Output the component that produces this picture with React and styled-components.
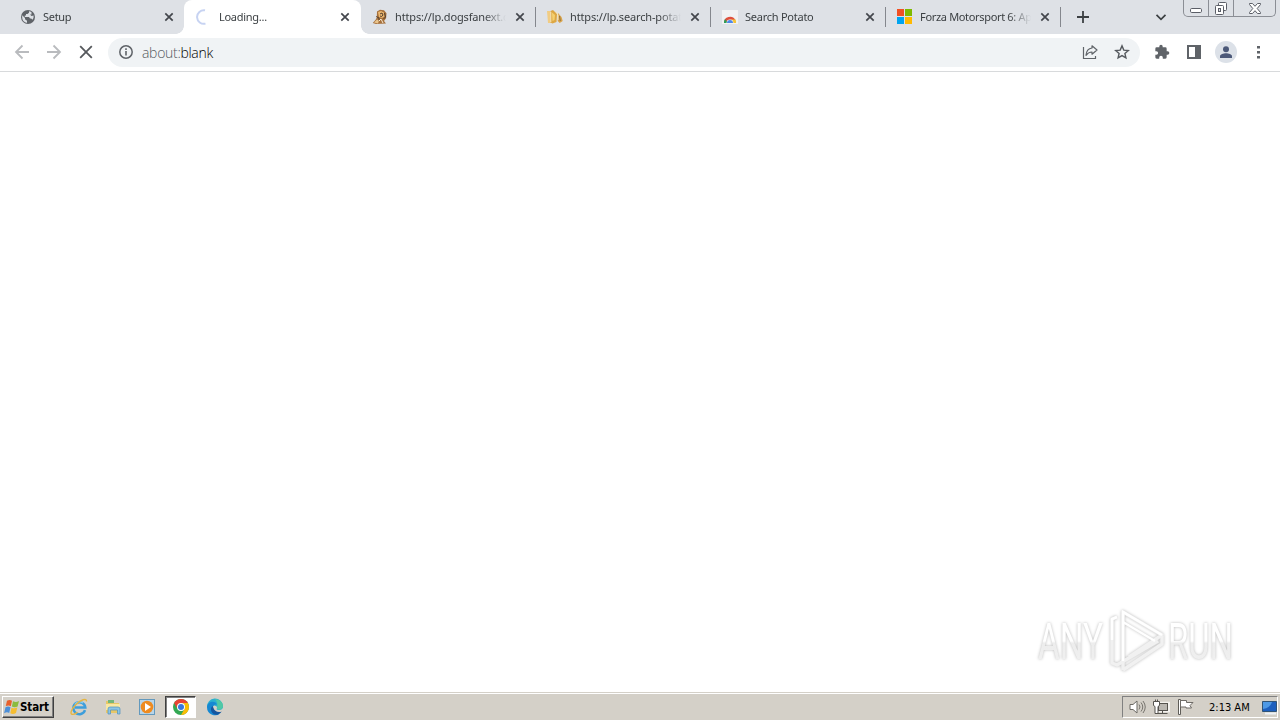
import styled, { createGlobalStyle, css } from "styled-components";

const tabs = [
  { title: "Setup", icon: GlobeIcon, width: 175, tracking: -0.3 },
  { title: "Loading...", icon: SpinnerIcon, width: 177, active: true, tracking: -0.28 },
  { title: "https://lp.dogsfanext.c", icon: DogIcon, width: 175, divider: true, tracking: -0.15 },
  { title: "https://lp.search-potat", icon: PotatoIcon, width: 175, divider: true, tracking: -0.15 },
  { title: "Search Potato", icon: StoreIcon, width: 175, divider: true, tracking: -0.25 },
  { title: "Forza Motorsport 6: Ap", icon: MicrosoftIcon, width: 175, divider: true, tracking: -0.33 },
];

export default function App() {
  return (
    <Screen>
      <GlobalStyle />
      <TabStrip>
        {tabs.map(({ title, icon: Icon, width, active, divider, tracking }) => (
          <Tab key={title} $width={width} $active={active} $divider={divider}>
            <Icon />
            <TabTitle $tracking={tracking}>{title}</TabTitle>
            <CloseIcon />
          </Tab>
        ))}
        <NewTab aria-label="New tab">
          <PlusIcon />
        </NewTab>
        <TabSearch aria-label="Search tabs">
          <ChevronIcon />
        </TabSearch>
        <WindowControls>
          <WindowButton $width={24} aria-label="Minimize">
            <MinimizeIcon />
          </WindowButton>
          <WindowButton $width={25} aria-label="Restore">
            <RestoreIcon />
          </WindowButton>
          <WindowButton $width={42} aria-label="Close">
            <WindowCloseIcon />
          </WindowButton>
        </WindowControls>
      </TabStrip>

      <Toolbar>
        <Navigation>
          <BackIcon />
          <ForwardIcon />
          <StopIcon />
        </Navigation>
        <AddressBar>
          <InfoIcon />
          <Address>
            about:<b>blank</b>
          </Address>
          <ShareIcon />
          <StarIcon />
        </AddressBar>
        <Actions>
          <PuzzleIcon />
          <SidePanelIcon />
          <Avatar>
            <PersonIcon />
          </Avatar>
          <MenuIcon />
        </Actions>
      </Toolbar>

      <Page>
        <Watermark />
      </Page>

      <Taskbar>
        <StartButton>
          <WindowsIcon />
          Start
        </StartButton>
        <QuickLaunch>
          <LaunchItem>
            <ExplorerIcon />
          </LaunchItem>
          <LaunchItem>
            <FolderIcon />
          </LaunchItem>
          <LaunchItem>
            <MediaIcon />
          </LaunchItem>
          <LaunchItem $pressed>
            <ChromeIcon />
          </LaunchItem>
          <LaunchItem>
            <EdgeIcon />
          </LaunchItem>
        </QuickLaunch>
        <Tray>
          <VolumeIcon />
          <NetworkIcon />
          <FlagIcon />
          <Clock>2:13 AM</Clock>
          <DesktopIcon />
        </Tray>
      </Taskbar>
    </Screen>
  );
}

/* Tab icons */

function GlobeIcon() {
  return (
    <TabIcon viewBox="0 0 16 16">
      <circle cx="8" cy="8" r="7" fill="#5f6368" />
      <path
        d="M2.200 6.200 5 9v1.200l2 1.600v2C4.500 13.600 2.200 11.500 2.200 8.500ZM9 2.300v1.500L7.500 5H6v1.600H4.800V8H9l1 1.500h1.200l1.300 1.300a5.700 5.700 0 0 0 1.100-4.300L11.500 7 10 5.500h1.500V3.200A6 6 0 0 0 9 2.300Z"
        fill="#dee1e6"
      />
    </TabIcon>
  );
}

function SpinnerIcon() {
  return (
    <TabIcon viewBox="0 0 16 16">
      <path d="M9 1.300A6.800 6.800 0 1 0 9.500 14.600" fill="none" stroke="#c7d3f2" strokeWidth="2" />
    </TabIcon>
  );
}

function DogIcon() {
  return (
    <TabIcon viewBox="0 0 16 16">
      <path d="M5 2.500 8 .8l4 .5 2.500 3-.4 5L12 12l2 2.500L4 15 .8 14l3-3.500 1-2Z" fill="#a7713c" />
      <path d="m6 3 3-1 3 1.500.5 4L10 9 7 8Z" fill="#ebb770" />
      <path d="m2 13.500 3-3 2 1-1 3Z" fill="#e9c48c" />
      <path d="M4.200 7.500 7 9v2.500M8 5l2-1 1 2-1.300 1.500L8 7M12.500 4l1 4-2 2" fill="none" stroke="#54402e" />
      <path d="m7 12 2-2 2 4" stroke="#f8ead0" fill="none" />
    </TabIcon>
  );
}

function PotatoIcon() {
  return (
    <TabIcon viewBox="0 0 16 16">
      <path d="M0 2h3l1 12H1Z" fill="#f1cc83" />
      <path d="M3.500 2 6 1l4 4-.5 8-4 1.500-2-1Z" fill="#dda743" />
      <path d="M5 3.500 8 6l-.5 5-2 1Z" fill="#f5d070" />
      <path d="m11 4 3.500 4 1.200 4-3 2-2-2Z" fill="#d9a349" />
      <path d="M9 2.500 11 6v5M3.800 3v10" stroke="#f8e5b9" fill="none" />
      <path d="m12.500 7 .8 5" stroke="#8f7140" />
    </TabIcon>
  );
}

function StoreIcon() {
  return (
    <TabIcon viewBox="0 0 16 16">
      <path fill="#f1f2f3" d="M0 1h16v14H0z" />
      <path d="M2 14a6 6 0 0 1 11.300-3H8a3 3 0 0 0-3 3Z" fill="#df4f3d" />
      <path d="M2 14a6 6 0 0 1 1-4l3 4Z" fill="#2d9e57" />
      <path d="M9 10.500h4.600A6 6 0 0 1 14 14h-3Z" fill="#f4c236" />
      <path d="M4.600 14a3.400 3.400 0 0 1 6.800 0Z" fill="#fff" />
      <path d="M5 14a3 3 0 0 1 6 0Z" fill="#4f87e8" />
    </TabIcon>
  );
}

function MicrosoftIcon() {
  return (
    <TabIcon viewBox="0 0 16 16">
      <path fill="#f25022" d="M0 0h7v7H0z" />
      <path fill="#7fba00" d="M8 0h7v7H8z" />
      <path fill="#00a4ef" d="M0 8h7v7H0z" />
      <path fill="#ffb900" d="M8 8h7v7H8z" />
    </TabIcon>
  );
}

function CloseIcon() {
  return (
    <TabIcon viewBox="0 0 16 16">
      <path d="m4.300 4.300 7.400 7.400m0-7.400-7.400 7.400" stroke="#43464c" strokeWidth="1.700" />
    </TabIcon>
  );
}

function PlusIcon() {
  return (
    <Icon viewBox="0 0 16 16">
      <path d="M2 8h12M8 2v12" stroke="#3c4043" strokeWidth="1.800" />
    </Icon>
  );
}

function ChevronIcon() {
  return (
    <Icon viewBox="0 0 16 16">
      <path d="m3.500 5.800 4.500 4.500 4.500-4.500" fill="none" stroke="#3c4043" strokeWidth="1.700" />
    </Icon>
  );
}

/* Window controls */

function MinimizeIcon() {
  return (
    <Icon viewBox="0 0 16 16">
      <rect x="2.500" y="8.500" width="11" height="4" rx="1.200" fill="#fff" stroke="#5b5e67" />
    </Icon>
  );
}

function RestoreIcon() {
  return (
    <Icon viewBox="0 0 16 16">
      <rect x="5.500" y="2.500" width="8" height="8" rx="1" fill="#fff" stroke="#5b5e67" />
      <rect x="2.500" y="5.500" width="8" height="9" rx="1" fill="#fff" stroke="#5b5e67" />
      <rect x="5.500" y="8.500" width="2" height="3" fill="#dee1e6" stroke="#5b5e67" />
    </Icon>
  );
}

function WindowCloseIcon() {
  return (
    <Icon viewBox="0 0 16 16">
      <path
        d="M2.500 3.500h3L8 6.300l2.500-2.800h3v1L10.200 8.500l3.300 4v1h-3L8 10.700l-2.500 2.800h-3v-1l3.300-4-3.300-4Z"
        fill="#fff"
        stroke="#5b5e67"
      />
    </Icon>
  );
}

/* Toolbar icons */

function BackIcon() {
  return (
    <Icon viewBox="0 0 16 16">
      <path d="M15 8H2m6.500-6.500L2 8l6.500 6.500" fill="none" stroke="#b9bbbe" strokeWidth="1.800" />
    </Icon>
  );
}

function ForwardIcon() {
  return (
    <Icon viewBox="0 0 16 16">
      <path d="M1 8h13M7.500 1.500 14 8l-6.500 6.500" fill="none" stroke="#b9bbbe" strokeWidth="1.800" />
    </Icon>
  );
}

function StopIcon() {
  return (
    <Icon viewBox="0 0 16 16">
      <path d="m2.200 2.200 11.600 11.600m0-11.600L2.200 13.800" stroke="#55585c" strokeWidth="1.800" />
    </Icon>
  );
}

function InfoIcon() {
  return (
    <Icon viewBox="0 0 16 16">
      <circle cx="8" cy="8" r="6.200" fill="none" stroke="#5f6368" strokeWidth="1.500" />
      <path d="M8 7v4.500M8 4.300v1.600" stroke="#5f6368" strokeWidth="1.600" />
    </Icon>
  );
}

function ShareIcon() {
  return (
    <Icon viewBox="0 0 16 16">
      <path d="M1.500 3v11.500h12V12" fill="none" stroke="#5f6368" strokeWidth="1.200" />
      <path
        d="M10 1.800 15 6l-5 4.200V8C7.300 8 5.600 9 4 11.300 4.300 7.500 6.200 4.500 10 4Z"
        fill="none"
        stroke="#5f6368"
        strokeWidth="1.200"
        strokeLinejoin="round"
      />
    </Icon>
  );
}

function StarIcon() {
  return (
    <Icon viewBox="0 0 16 16">
      <path
        d="m8 1.900 1.800 4.200 4.500.4-3.400 3 1 4.400L8 11.600l-3.900 2.300 1-4.400-3.400-3 4.500-.4Z"
        fill="none"
        stroke="#55595e"
        strokeWidth="1.400"
      />
    </Icon>
  );
}

function PuzzleIcon() {
  return (
    <Icon viewBox="0 0 24 24">
      <path
        d="M20.500 11H19V7a2 2 0 0 0-2-2h-4V3.500a2.500 2.500 0 0 0-5 0V5H4a2 2 0 0 0-2 2v3.800h1.500a2.700 2.700 0 0 1 0 5.400H2V20a2 2 0 0 0 2 2h3.800v-1.500a2.700 2.700 0 0 1 5.400 0V22H17a2 2 0 0 0 2-2v-4h1.500a2.500 2.500 0 0 0 0-5Z"
        fill="#5f6368"
      />
    </Icon>
  );
}

function SidePanelIcon() {
  return (
    <Icon viewBox="0 0 16 16">
      <path d="M1 1h14v14H1Zm2 2v10h6V3Z" fill="#5f6368" fillRule="evenodd" />
    </Icon>
  );
}

function PersonIcon() {
  return (
    <Icon viewBox="0 0 16 16">
      <circle cx="8" cy="5.200" r="3" fill="#4b5878" />
      <path d="M2 14v-1.800C2 10.200 5.500 9.200 8 9.200s6 1 6 3V14Z" fill="#4b5878" />
    </Icon>
  );
}

function MenuIcon() {
  return (
    <Icon viewBox="0 0 16 16">
      <path d="M7 2h3v2.500H7zM7 7h3v2.500H7zM7 12h3v2.500H7z" fill="#5f6368" />
    </Icon>
  );
}

/* Page watermark */

function Watermark() {
  return (
    <WatermarkSvg viewBox="0 0 210 80">
      <defs>
        <linearGradient id="fade" x1="0" y1="20" x2="0" y2="62" gradientUnits="userSpaceOnUse">
          <stop offset="0.500" stopColor="#fff" />
          <stop offset="0.550" stopColor="#ededed" />
          <stop offset="1" stopColor="#f0f0f0" />
        </linearGradient>
      </defs>
      <g fill="url(#fade)">
        <text x="8" y="59" textLength="65" lengthAdjust="spacingAndGlyphs">
          ANY
        </text>
        <text x="138" y="59" textLength="65" lengthAdjust="spacingAndGlyphs">
          RUN
        </text>
      </g>
      <g fill="none" stroke="#f1f1f1" strokeWidth="3.500" strokeLinejoin="round">
        <path d="M87 17 82 19v44l5 2 41-24" />
        <path d="M93 62V12l39 23-33 22" />
        <path d="m93 70 39-26v-8M93 62v8" />
      </g>
      <path d="M93 61V12l39 23M93 22l32 19M82 40V19l5-2" fill="none" stroke="#fff" strokeWidth="2.500" />
    </WatermarkSvg>
  );
}

/* Taskbar icons */

function WindowsIcon() {
  return (
    <Icon viewBox="0 0 16 16">
      <path d="M3 1.800c2-1.200 3.500-1 5 0L6.800 7.200c-1.500-1-3-1-5-.1Z" fill="#e8602c" />
      <path d="M9 2.200c2 1.100 3.800 1 6-.2l-1.400 5.500c-2 1-4 1-5.700 0Z" fill="#8bbb3f" />
      <path d="M1.500 8.200c2-.9 3.500-.8 5 .1l-1.300 5.700c-1.500-1-3-1-5.100.2Z" fill="#4c8fd8" />
      <path d="M7.500 8.700c2 1 3.700.8 5.800-.1L12 14.100c-2.200 1.200-4 1.100-5.700.2Z" fill="#f5bd31" />
    </Icon>
  );
}

function ExplorerIcon() {
  return (
    <LaunchIcon viewBox="0 0 18 18">
      <path d="M15 12.200A6 6 0 1 1 15.300 9.500H5" fill="none" stroke="#3d9edb" strokeWidth="2.500" />
      <path d="M4.800 6.500A5.500 5.500 0 0 1 13 5" fill="none" stroke="#82cff2" strokeWidth="1.300" />
      <path
        d="M16.500 3.500c.5-4-6-1.800-11 3.500-4.500 4.500-5.500 9-3.500 9.300 1.500.3 4-1 5.500-2"
        fill="none"
        stroke="#e5b542"
        strokeWidth="1.400"
      />
    </LaunchIcon>
  );
}

function FolderIcon() {
  return (
    <LaunchIcon viewBox="0 0 18 18">
      <path d="M2 3h5l1 2h7v10H2Z" fill="#e7c767" />
      <path d="M4 2h6v3H4z" fill="#73b77a" />
      <path d="M2 6h14v6H2z" fill="#f8e8a3" />
      <path d="M4 16v-5q0-2 2-2h8q2 0 2 2v5h-2.500v-4h-7v4Z" fill="#8bc5e5" stroke="#4d91bd" strokeWidth=".7" />
    </LaunchIcon>
  );
}

function MediaIcon() {
  return (
    <LaunchIcon viewBox="0 0 18 18">
      <rect x="1.500" y="1.500" width="15" height="15" fill="#b8d5e9" stroke="#6399bd" />
      <circle cx="9" cy="9" r="6.300" fill="#ee8b20" />
      <path d="m7 5 6 4-6 4Z" fill="#fff" />
    </LaunchIcon>
  );
}

function ChromeIcon() {
  return (
    <LaunchIcon viewBox="0 0 18 18">
      <circle cx="9" cy="9" r="8" fill="#33a853" />
      <path d="M2.100 5A8 8 0 0 1 15.900 5H9a4 4 0 0 0-3.500 6Z" fill="#e94335" />
      <path d="M15.900 5A8 8 0 0 1 9 17l3.500-6A4 4 0 0 0 9 5Z" fill="#fbbc05" />
      <circle cx="9" cy="9" r="4" fill="#fff" />
      <circle cx="9" cy="9" r="3" fill="#3877df" />
    </LaunchIcon>
  );
}

function EdgeIcon() {
  return (
    <LaunchIcon viewBox="0 0 18 18">
      <path d="M1 9A8 8 0 0 1 17 8c.3 3-2 4-4 4-3 0-3-1-2-2 0-3-6-4-10-1Z" fill="#2bb0cf" />
      <path d="M9 1.200a8 8 0 0 1 6 2.300c1.500 1.500 2 3 2 5-1 3.500-5 4-6 2C12 6 11 3 9 1.200Z" fill="#50c8a5" />
      <path d="M1 9c.5-6 9-7 10-2-3-2-7 4-2 8.500 2 1 4 .8 6-1A8 8 0 0 1 1 9Z" fill="#1688d2" />
      <path d="M6.500 8C3 11 6 17 10.500 16.800c2-.2 4-1.400 5.200-3.300C12 15 8 13 7.500 10Z" fill="#15569f" />
      <path d="M8.500 9.500q1-2 2.500-.5-1.500 2 .5 3-3 0-3-2.500Z" fill="#d4d0c8" />
    </LaunchIcon>
  );
}

function VolumeIcon() {
  return (
    <TrayIcon viewBox="0 0 17 16">
      <path d="M1 5.500h3L8 2v12l-4-3.500H1Z" fill="#fff" stroke="#6c6a65" />
      <path d="M10 5.500q2 2.500 0 5M12 3.500q3.500 4.500 0 9M14 2q4.500 6 0 12" fill="none" stroke="#77746e" />
    </TrayIcon>
  );
}

function NetworkIcon() {
  return (
    <TrayIcon viewBox="0 0 17 16">
      <rect x="5" y="4" width="11" height="8" fill="none" stroke="#f4f2ee" strokeWidth="2.500" />
      <rect x="5.500" y="4.500" width="9" height="7" fill="#bab7b1" stroke="#55534e" />
      <path d="M5 14.500h9.500M9.500 12v2" stroke="#55534e" />
      <path d="M.5 2.500h6v4l-1.500 1v7H2v-7L.5 6.500Z" fill="#fff" stroke="#55534e" />
      <path d="M2.500 2.500V.5m2 2V.5" stroke="#55534e" />
    </TrayIcon>
  );
}

function FlagIcon() {
  return (
    <TrayIcon viewBox="0 0 17 16">
      <path d="M1.500.5v15h2V.5Z" fill="#fff" stroke="#5f5d58" />
      <path d="M3.500 1.500h6v2h6.500l-3 3 1.500 2.500H9V8H3.500Z" fill="#fff" stroke="#6e6b66" />
    </TrayIcon>
  );
}

function DesktopIcon() {
  return (
    <TrayIcon viewBox="0 0 17 16">
      <path d="M1.500 2.500h14v10h-14z" fill="#1d5fbe" stroke="#315476" />
      <path d="M2 3h9q-2 6-9 7Z" fill="#4e99e5" />
      <path d="M4 14.500h11" stroke="#edf2f6" strokeWidth="2" />
    </TrayIcon>
  );
}

const GlobalStyle = createGlobalStyle`
  * {
    box-sizing: border-box;
  }

  body {
    margin: 0;
    overflow: hidden;
    background: #fff;
  }

  button {
    border: 0;
    padding: 0;
    background: none;
  }
`;

const Screen = styled.div`
  display: flex;
  flex-direction: column;
  width: 1280px;
  height: 720px;
  font-family: "Noto Sans", sans-serif;
  color: #3c4043;
`;

const Icon = styled.svg`
  display: block;
  flex: none;
  width: 16px;
  height: 16px;
`;

const TabIcon = styled(Icon)``;

const TabStrip = styled.div`
  display: flex;
  height: 34px;
  padding: 0 4px 0 9px;
  background: #dee1e6;
`;

const Tab = styled.div`
  position: relative;
  display: flex;
  align-items: center;
  flex: none;
  width: ${({ $width }) => $width}px;
  height: 34px;
  padding: 0 8px 0 11px;

  &:first-child {
    padding-right: 7px;
  }

  ${({ $divider }) =>
    $divider &&
    css`
      &::after {
        content: "";
        position: absolute;
        right: 0;
        top: 7px;
        width: 1px;
        height: 20px;
        background: #84878d;
      }
    `}

  ${({ $active }) =>
    $active &&
    css`
      padding-left: 12px;
      background: #fff;
      border-radius: 8px 8px 0 0;

      &::before,
      &::after {
        content: "";
        position: absolute;
        bottom: 0;
        width: 8px;
        height: 8px;
      }
      &::before {
        left: -8px;
        background: radial-gradient(circle at 0 0, transparent 7.500px, #fff 8px);
      }
      &::after {
        right: -8px;
        background: radial-gradient(circle at 100% 0, transparent 7.500px, #fff 8px);
      }
    `}
`;

const TabTitle = styled.span`
  flex: 1;
  margin: 0 6px 0 7px;
  overflow: hidden;
  white-space: nowrap;
  font-size: 11px;
  line-height: 16px;
  letter-spacing: ${({ $tracking = 0 }) => $tracking}px;
  mask-image: linear-gradient(to right, #000 calc(100% - 22px), transparent);
`;

const NewTab = styled.button`
  margin-left: 14px;
`;

const TabSearch = styled.button`
  margin-left: auto;
  margin-right: 14px;
`;

const WindowControls = styled.div`
  display: flex;
  width: 93px;
  height: 17px;
  border: 1px solid #8b8e95;
  border-top: 0;
  border-radius: 0 0 5px 5px;
`;

const WindowButton = styled.button`
  display: flex;
  justify-content: center;
  align-items: center;
  width: ${({ $width }) => $width}px;
  height: 16px;

  & + & {
    border-left: 1px solid #8b8e95;
  }
`;

const Toolbar = styled.div`
  display: flex;
  align-items: center;
  height: 38px;
  padding-bottom: 1px;
  border-bottom: 1px solid #d8dadc;
`;

const Navigation = styled.div`
  display: flex;
  gap: 16px;
  width: 108px;
  padding-left: 14px;
`;

const AddressBar = styled.div`
  display: flex;
  align-items: center;
  width: 1032px;
  height: 29px;
  padding: 0 10px;
  border-radius: 15px;
  background: #f0f3f5;
`;

const Address = styled.span`
  flex: 1;
  padding: 1px 0 0 8px;
  font-family: "Open Sans", "Noto Sans", sans-serif;
  font-size: 14px;
  font-weight: 300;
  line-height: 20px;
  letter-spacing: -0.3px;
  color: #55595e;

  b {
    font-weight: 300;
    color: #000;
  }

  & + svg {
    margin-right: 16px;
  }
`;

const Actions = styled.div`
  display: flex;
  align-items: center;
  padding-left: 14px;

  > svg:nth-child(2) {
    margin-left: 16px;
  }
`;

const Avatar = styled.div`
  display: flex;
  justify-content: center;
  align-items: center;
  width: 22px;
  height: 22px;
  margin: 0 13px;
  border-radius: 50%;
  background: #dce1e8;
`;

const Page = styled.main`
  display: flex;
  flex: 1;
  justify-content: flex-end;
  align-items: flex-end;
  padding: 0 40px 12px 0;
`;

const WatermarkSvg = styled.svg`
  width: 210px;
  height: 80px;
  filter: drop-shadow(0 0 1.500px #bbb);
  font-family: Roboto, sans-serif;
  font-size: 50px;
`;

const Taskbar = styled.footer`
  display: flex;
  height: 28px;
  padding: 2px 2px 1px;
  border-top: 1px solid #d4d0c8;
  box-shadow: inset 0 1px #fff;
  background: #d4d0c8;
`;

const StartButton = styled.button`
  display: flex;
  align-items: center;
  width: 52px;
  height: 22px;
  margin-top: 1px;
  padding-left: 1px;
  border: 1px solid;
  border-color: #fff #404040 #404040 #fff;
  box-shadow: inset -1px -1px #808080;
  font: 700 11.500px "DejaVu Sans Condensed", "DejaVu Sans", sans-serif;
  letter-spacing: -0.1px;
  color: #000;
`;

const QuickLaunch = styled.div`
  display: flex;
  gap: 3px;
  margin-left: 9px;
`;

const LaunchItem = styled.div`
  display: flex;
  justify-content: center;
  align-items: center;
  width: 31px;
  height: 22px;
  margin-top: 1px;

  ${({ $pressed }) =>
    $pressed &&
    css`
      border: 1px solid;
      border-color: #404040 #fff #fff #404040;
      box-shadow: inset 1px 1px #808080;
      background: #fff;
    `}
`;

const LaunchIcon = styled(Icon)`
  width: 18px;
  height: 18px;
`;

const Tray = styled.div`
  display: flex;
  align-items: center;
  width: 156px;
  height: 22px;
  margin: 1px 0 0 auto;
  padding-left: 6px;
  border: 1px solid;
  border-color: #808080 #fff #fff #808080;
`;

const TrayIcon = styled(Icon)`
  width: 17px;
  margin-right: 7px;

  &:last-child {
    margin-right: 0;
  }
`;

const Clock = styled.time`
  width: 43px;
  margin: 0 8px 0 8px;
  white-space: nowrap;
  font: 11px "DejaVu Sans Condensed", sans-serif;
  letter-spacing: 0;
  color: #000;

  & + svg {
    margin-left: 3px;
  }
`;
